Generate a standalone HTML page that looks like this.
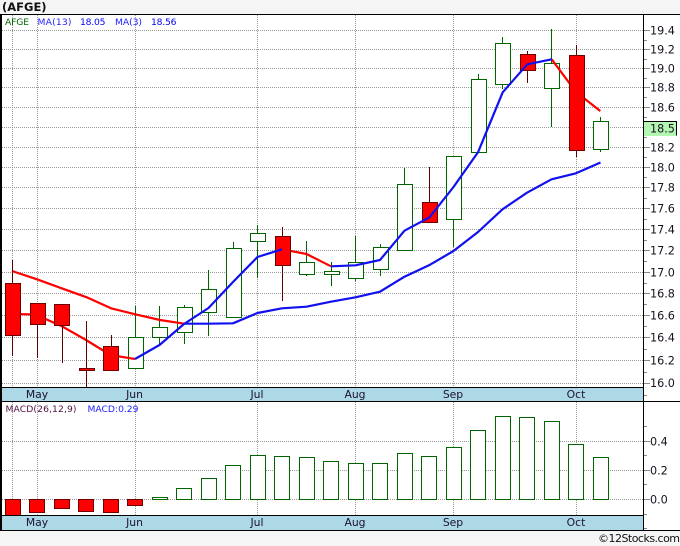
<!DOCTYPE html>
<html><head><meta charset="utf-8"><style>
html,body{margin:0;padding:0;background:#f5f5f5}
svg{display:block}
text{font-family:"DejaVu Sans",sans-serif}
.ax{font-size:11.2px;fill:#1a1020}
.mo{font-size:10.8px;fill:#1a1030;text-anchor:middle}
.lg{font-size:9.2px}
.g rect{fill:#fff;stroke:#006400;stroke-width:1}
.r rect{fill:#f00;stroke:#700000;stroke-width:1}
.g path{stroke:#006400;stroke-width:1;fill:none}
.r path{stroke:#600000;stroke-width:1;fill:none}
</style></head><body>
<svg width="680" height="546" viewBox="0 0 680 546" xmlns="http://www.w3.org/2000/svg">
<rect width="680" height="546" fill="#f5f5f5"/>
<rect x="0" y="14" width="644" height="516" fill="#fff"/>
<rect x="644" y="14" width="36" height="516" fill="#fff"/>
<text x="2" y="11" style="font-weight:bold;font-size:11.5px;fill:#111">(AFGE)</text>

<!-- grid -->
<g fill="none" stroke="#999" stroke-width="1" stroke-dasharray="1 1">
<path d="M2 30.5H643M2 49.5H643M2 68.5H643M2 87.5H643M2 107.5H643M2 127.5H643M2 147.5H643M2 167.5H643M2 187.5H643M2 208.5H643M2 229.5H643M2 250.5H643M2 272.5H643M2 293.5H643M2 315.5H643M2 337.5H643M2 360.5H643M2 383.5H643"/>
<path d="M2 441.5H643M2 470.5H643M2 499.5H643"/>
<path d="M12.5 15V387M37.5 15V387M135.5 15V387M257.5 15V387M355.5 15V387M453.5 15V387M576.5 15V387"/>
<path d="M12.5 402V515M37.5 402V515M135.5 402V515M257.5 402V515M355.5 402V515M453.5 402V515M576.5 402V515"/>
</g>
<!-- axis ticks -->
<path fill="none" stroke="#8a8a8a" d="M644 30.5H650M644 49.5H650M644 68.5H650M644 87.5H650M644 107.5H650M644 147.5H650M644 167.5H650M644 187.5H650M644 208.5H650M644 229.5H650M644 250.5H650M644 272.5H650M644 293.5H650M644 315.5H650M644 337.5H650M644 360.5H650M644 383.5H650M644 40.5H647M644 59.5H647M644 78.5H647M644 97.5H647M644 117.5H647M644 137.5H647M644 157.5H647M644 177.5H647M644 198.5H647M644 219.5H647M644 240.5H647M644 261.5H647M644 283.5H647M644 304.5H647M644 326.5H647M644 349.5H647M644 372.5H647M644 395.5H647M644 441.5H650M644 470.5H650M644 499.5H650M644 426.5H647M644 455.5H647M644 484.5H647M644 514.5H647M644 528.5H647"/>

<!-- green candles -->
<g class="g">
<path d="M135.5 306V337M159.5 306V345M184.5 305V344M208.5 270V336M233.5 242V248M257.5 225V278M306.5 241V276M331.5 262V286M355.5 236V281M380.5 244V276M404.5 168V184M453.5 219V247M478.5 74V79M502.5 37V89M551.5 29V127M600.5 117V152"/>
<rect x="128.5" y="337.5" width="15" height="31"/>
<rect x="152.5" y="327.5" width="15" height="10"/>
<rect x="177.5" y="307.5" width="15" height="25"/>
<rect x="201.5" y="289.5" width="15" height="23"/>
<rect x="226.5" y="248.5" width="15" height="69"/>
<rect x="250.5" y="233.5" width="15" height="8"/>
<rect x="299.5" y="262.5" width="15" height="12"/>
<rect x="324.5" y="271.5" width="15" height="3"/>
<rect x="348.5" y="262.5" width="15" height="16"/>
<rect x="373.5" y="247.5" width="15" height="22"/>
<rect x="397.5" y="184.5" width="15" height="66"/>
<rect x="446.5" y="156.5" width="15" height="63"/>
<rect x="471.5" y="79.5" width="15" height="73"/>
<rect x="495.5" y="43.5" width="15" height="41"/>
<rect x="544.5" y="63.5" width="15" height="25"/>
<rect x="593.5" y="121.5" width="15" height="28"/>
</g>

<!-- red MA segments -->
<g fill="none" stroke="#ff0000" stroke-width="2.2" stroke-linejoin="round">
<path d="M12 271L37 279.3L61.7 288.3L86.7 297.3L111 308.3L135.3 314.3L160 320L184.3 323.7"/>
<path d="M12 314L37 314.5L45.5 319L61.5 326L86 340L110.5 355L135 359"/>
<path d="M282 249.3L306.5 254L331 266.3"/>
<path d="M551.7 59.3L576 92L600.3 111"/>
</g>

<!-- red candles -->
<g class="r">
<path d="M12.5 260V356M37.5 324V358M62.5 325V363M86.5 321V387M111.5 335V346M282.5 227V301M429.5 167V202M527.5 51V83M576.5 45V157"/>
<rect x="5.5" y="283.5" width="15" height="52"/>
<rect x="30.5" y="303.5" width="15" height="21"/>
<rect x="54.5" y="304.5" width="15" height="21"/>
<rect x="79.5" y="368.5" width="15" height="2"/>
<rect x="103.5" y="346.5" width="15" height="24"/>
<rect x="275.5" y="236.5" width="15" height="29"/>
<rect x="422.5" y="202.5" width="15" height="20"/>
<rect x="520.5" y="54.5" width="15" height="16"/>
<rect x="569.5" y="55.5" width="15" height="95"/>
</g>

<!-- blue lines -->
<g fill="none" stroke="#1010f0" stroke-width="2.2" stroke-linejoin="round">
<path d="M135 359L159.5 345L184 324L208.5 308L233 282L257.5 257L282 249.3"/>
<path d="M331 266.3L355.5 265.3L380 260L404.5 230.7L429.5 217.3L453.5 187L478 152.3L502.7 92.3L527.3 64.3L551.7 59.3"/>
<path d="M184.3 323.7L208.5 323.7L233 323.3L257.5 313L282 308.3L306.5 306.7L331 301.7L355.5 297.3L380 291.7L404.5 276.7L429 265.3L453.5 251L478 232L502.5 209.3L527 192.7L551.5 179.3L576 173.3L600.5 162.5"/>
</g>

<!-- MACD bars -->
<g class="r">
<rect x="5.5" y="499.5" width="15" height="16"/>
<rect x="29.5" y="499.5" width="15" height="13"/>
<rect x="54.5" y="499.5" width="15" height="9"/>
<rect x="78.5" y="499.5" width="15" height="12"/>
<rect x="103.5" y="499.5" width="15" height="13"/>
<rect x="127.5" y="499.5" width="15" height="6"/>
</g>
<g class="g">
<rect x="152.5" y="497.5" width="15" height="2"/>
<rect x="176.5" y="488.5" width="15" height="11"/>
<rect x="201.5" y="478.5" width="15" height="21"/>
<rect x="225.5" y="465.5" width="15" height="34"/>
<rect x="250.5" y="455.5" width="15" height="44"/>
<rect x="274.5" y="456.5" width="15" height="43"/>
<rect x="299.5" y="457.5" width="15" height="42"/>
<rect x="323.5" y="461.5" width="15" height="38"/>
<rect x="348.5" y="463.5" width="15" height="36"/>
<rect x="372.5" y="463.5" width="15" height="36"/>
<rect x="397.5" y="453.5" width="15" height="46"/>
<rect x="421.5" y="456.5" width="15" height="43"/>
<rect x="446.5" y="447.5" width="15" height="52"/>
<rect x="470.5" y="430.5" width="15" height="69"/>
<rect x="495.5" y="416.5" width="15" height="83"/>
<rect x="519.5" y="417.5" width="15" height="82"/>
<rect x="544.5" y="421.5" width="15" height="78"/>
<rect x="568.5" y="444.5" width="15" height="55"/>
<rect x="593.5" y="457.5" width="15" height="42"/>
</g>

<!-- bands -->
<rect x="1" y="387" width="642" height="14" fill="#add8e6"/>
<rect x="1" y="515" width="642" height="15" fill="#add8e6"/>
<!-- frame -->
<path fill="none" stroke="#000" stroke-width="1" d="M0 14.5H680M643.5 14V530M0 387.5H643.5M0 401.5H680M0 515.5H643.5M0 530.5H680"/>
<rect x="0" y="14" width="2" height="517" fill="#000"/>

<!-- legend -->
<text class="lg" x="5" y="25" fill="#006400" textLength="24">AFGE</text>
<text class="lg" x="37.5" y="25" fill="#2222ff" textLength="34">MA(13)</text>
<text class="lg" x="80" y="25" fill="#0000ff" textLength="25.5">18.05</text>
<text class="lg" x="115" y="25" fill="#2222ff" textLength="27">MA(3)</text>
<text class="lg" x="151" y="25" fill="#0000ff" textLength="25.5">18.56</text>
<text class="lg" x="5.5" y="412" fill="#501040" textLength="71">MACD(26,12,9)</text>
<text class="lg" x="87.5" y="412" fill="#2222ff" textLength="51">MACD:0.29</text>

<!-- axis labels -->
<g class="ax">
<text x="650" y="34.5">19.4</text><text x="650" y="53.5">19.2</text><text x="650" y="72.5">19.0</text><text x="650" y="91.5">18.8</text><text x="650" y="111.5">18.6</text><text x="650" y="151.5">18.2</text><text x="650" y="171.5">18.0</text><text x="650" y="191.5">17.8</text><text x="650" y="212.5">17.6</text><text x="650" y="233.5">17.4</text><text x="650" y="254.5">17.2</text><text x="650" y="276.5">17.0</text><text x="650" y="297.5">16.8</text><text x="650" y="319.5">16.6</text><text x="650" y="341.5">16.4</text><text x="650" y="364.5">16.2</text><text x="650" y="387">16.0</text>
<text x="650" y="445.5">0.4</text><text x="650" y="474.5">0.2</text><text x="650" y="503.5">0.0</text>
</g>
<!-- price tag -->
<rect x="644" y="121" width="33" height="15" fill="#b4f7b4"/>
<path fill="none" stroke="#000" d="M643 121.5H676.5V135.5"/>
<text class="ax" x="650" y="132.5">18.5</text>

<!-- months -->
<g class="mo">
<text x="37" y="398">May</text><text x="134.5" y="398">Jun</text><text x="257" y="398">Jul</text><text x="355" y="398">Aug</text><text x="453" y="398">Sep</text><text x="576" y="398">Oct</text>
<text x="37" y="526">May</text><text x="134.5" y="526">Jun</text><text x="257" y="526">Jul</text><text x="355" y="526">Aug</text><text x="453" y="526">Sep</text><text x="576" y="526">Oct</text>
</g>
<text x="598" y="542" style="font-size:11px;fill:#111" textLength="82">©12Stocks.com</text>
</svg>
</body></html>
